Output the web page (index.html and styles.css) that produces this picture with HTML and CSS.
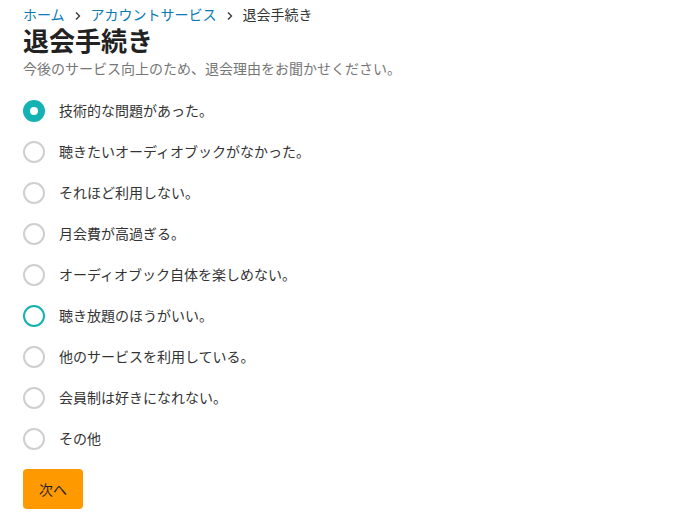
FILE: index.html
```html
<!DOCTYPE html>
<html lang="ja">
<head>
<meta charset="utf-8">
<title>退会手続き</title>
<link rel="stylesheet" href="styles.css">
</head>
<body>
<div class="page">
  <nav class="crumbs">
    <a href="#" class="crumb-link">ホーム</a>
    <span class="sep"><svg width="8" height="10" viewBox="0 0 8 10"><path d="M2 1.5 L5.5 5 L2 8.5" fill="none" stroke="#333" stroke-width="1.3"/></svg></span>
    <a href="#" class="crumb-link">アカウントサービス</a>
    <span class="sep"><svg width="8" height="10" viewBox="0 0 8 10"><path d="M2 1.5 L5.5 5 L2 8.5" fill="none" stroke="#333" stroke-width="1.3"/></svg></span>
    <span class="crumb-current">退会手続き</span>
  </nav>
  <h1 class="title">退会手続き</h1>
  <p class="lead">今後のサービス向上のため、退会理由をお聞かせください。</p>
  <form class="reasons">
    <label class="opt"><input type="radio" name="r" checked><span class="dot checked"></span><span class="txt">技術的な問題があった。</span></label>
    <label class="opt"><input type="radio" name="r"><span class="dot"></span><span class="txt">聴きたいオーディオブックがなかった。</span></label>
    <label class="opt"><input type="radio" name="r"><span class="dot"></span><span class="txt">それほど利用しない。</span></label>
    <label class="opt"><input type="radio" name="r"><span class="dot"></span><span class="txt">月会費が高過ぎる。</span></label>
    <label class="opt"><input type="radio" name="r"><span class="dot"></span><span class="txt">オーディオブック自体を楽しめない。</span></label>
    <label class="opt"><input type="radio" name="r"><span class="dot focus"></span><span class="txt">聴き放題のほうがいい。</span></label>
    <label class="opt"><input type="radio" name="r"><span class="dot"></span><span class="txt">他のサービスを利用している。</span></label>
    <label class="opt"><input type="radio" name="r"><span class="dot"></span><span class="txt">会員制は好きになれない。</span></label>
    <label class="opt"><input type="radio" name="r"><span class="dot"></span><span class="txt">その他</span></label>
    <button type="button" class="next">次へ</button>
  </form>
</div>
</body>
</html>
```

FILE: styles.css
```css
html, body {
  margin: 0;
  padding: 0;
  background: #fff;
}
body {
  font-family: "Liberation Sans", "Noto Sans CJK JP", sans-serif;
  color: #333;
}
.page {
  padding: 5px 23px 0;
}
.crumbs {
  display: flex;
  align-items: center;
  height: 20px;
  font-size: 14px;
  line-height: 20px;
}
.crumb-link {
  color: #0a7ab5;
  text-decoration: none;
}
.sep {
  display: flex;
  align-items: center;
  width: 26px;
  justify-content: center;
  margin-top: 2px;
}
.crumb-current {
  color: #333;
}
.title {
  margin: 0;
  font-size: 26px;
  line-height: 34px;
  font-weight: 700;
  color: #222;
}
.lead {
  margin: 0;
  font-size: 14px;
  line-height: 20px;
  color: #767676;
}
.reasons {
  margin: 11px 0 0;
  display: flex;
  flex-direction: column;
  align-items: flex-start;
}
.opt {
  display: flex;
  align-items: center;
  height: 41px;
  cursor: pointer;
}
.opt input {
  display: none;
}
.dot {
  box-sizing: border-box;
  width: 22px;
  height: 22px;
  border-radius: 50%;
  border: 2px solid #cfcfcf;
  background: #fff;
  flex: none;
}
.dot.checked {
  border: 7px solid #14b2b2;
}
.dot.focus {
  border-color: #14b2b2;
}
.txt {
  margin-left: 14px;
  font-size: 14px;
  line-height: 20px;
  color: #333;
}
.next {
  margin-top: 10px;
  width: 60px;
  height: 40px;
  border: none;
  border-radius: 4px;
  background: #ff9900;
  color: #222;
  font-family: "Liberation Sans", "Noto Sans CJK JP", sans-serif;
  font-size: 14px;
  padding: 0;
  cursor: pointer;
}
```
